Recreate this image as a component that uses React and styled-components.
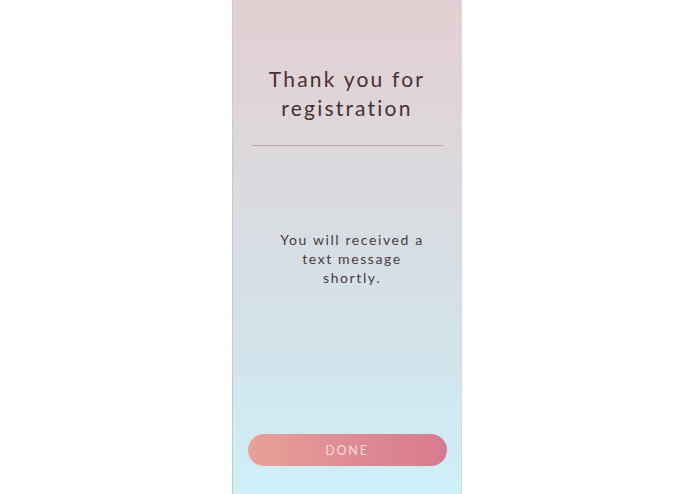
import React from "react";
import styled, { createGlobalStyle } from "styled-components";

const GlobalStyle = createGlobalStyle`
  html, body {
    margin: 0;
    padding: 0;
    background: #ffffff;
  }
  body {
    font-family: "Lato", "Noto Sans", sans-serif;
  }
`;

const Page = styled.div`
  width: 695px;
  height: 494px;
  display: flex;
  justify-content: center;
  padding-right: 1px;
  box-sizing: border-box;
`;

const Screen = styled.div`
  width: 230px;
  height: 494px;
  box-sizing: border-box;
  border-left: 1px solid #c9c9cc;
  border-right: 1px solid #d6d9dc;
  border-top: 1px solid #d8d0d2;
  background: linear-gradient(180deg, #e3cfd1 0%, #dadbe0 40%, #d2e3ea 70%, #cdf0fb 100%);
  display: flex;
  flex-direction: column;
  align-items: center;
`;

const Title = styled.h1`
  margin: 63px 0 0;
  font-family: "Lato", "Noto Sans", sans-serif;
  font-weight: 400;
  font-size: 21px;
  line-height: 29px;
  letter-spacing: 2.2px;
  color: #4a2f31;
  text-align: center;
`;

const Divider = styled.hr`
  width: 191px;
  margin: 23px 0 0;
  border: none;
  border-top: 1px solid #b3adb2;
`;

const Message = styled.p`
  margin: 84px 0 0;
  padding-left: 10px;
  width: 150px;
  font-family: "Lato", "Noto Sans", sans-serif;
  font-size: 14px;
  line-height: 19px;
  letter-spacing: 1.6px;
  color: #4a3a3c;
  text-align: center;
`;

const Spacer = styled.div`
  flex: 1;
`;

const DoneButton = styled.button`
  width: 199px;
  height: 32px;
  margin-bottom: 28px;
  border: none;
  border-radius: 16px;
  background: linear-gradient(90deg, #e8a197 0%, #df8a93 55%, #d87a8f 100%);
  color: #f8dde0;
  font-family: "Lato", "Noto Sans", sans-serif;
  font-size: 12.5px;
  letter-spacing: 1.8px;
  cursor: pointer;
`;

export default function App() {
  return (
    <>
      <GlobalStyle />
      <Page>
        <Screen>
          <Title>
            Thank you for
            <br />
            registration
          </Title>
          <Divider />
          <Message>You will received a text message shortly.</Message>
          <Spacer />
          <DoneButton>DONE</DoneButton>
        </Screen>
      </Page>
    </>
  );
}
